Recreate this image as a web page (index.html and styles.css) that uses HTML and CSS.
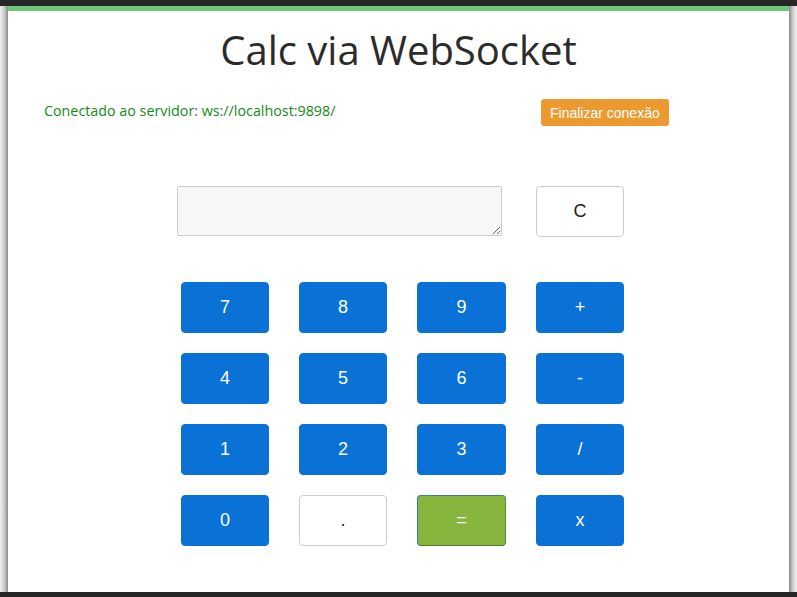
FILE: index.html
```html
<!DOCTYPE html>
<html lang="pt">
<head>
<meta charset="utf-8">
<title>Calc via WebSocket</title>
<link rel="stylesheet" href="styles.css">
</head>
<body>
<div class="frame">
  <div class="page">
    <h1 class="title">Calc via WebSocket</h1>
    <div class="status-row">
      <span class="status">Conectado ao servidor: ws://localhost:9898/</span>
      <button class="btn-close">Finalizar conexão</button>
    </div>
    <div class="calc">
      <div class="display-row">
        <textarea class="display"></textarea>
        <button class="key key-light key-clear">C</button>
      </div>
      <div class="keys">
        <button class="key">7</button>
        <button class="key">8</button>
        <button class="key">9</button>
        <button class="key">+</button>
        <button class="key">4</button>
        <button class="key">5</button>
        <button class="key">6</button>
        <button class="key">-</button>
        <button class="key">1</button>
        <button class="key">2</button>
        <button class="key">3</button>
        <button class="key">/</button>
        <button class="key">0</button>
        <button class="key key-light">.</button>
        <button class="key key-eq">=</button>
        <button class="key">x</button>
      </div>
    </div>
  </div>
</div>
</body>
</html>
```

FILE: styles.css
```css
html, body {
  margin: 0;
  padding: 0;
}
body {
  background: #262626;
  height: 597px;
  overflow: hidden;
  font-family: "Open Sans", sans-serif;
}
.frame {
  margin-top: 6px;
  height: 586px;
  padding: 0 8px;
  background:
    linear-gradient(to right, #f2f2f2 0, #cfcfcf 4px, #8a8a8a 8px) left top / 8px 100% no-repeat,
    linear-gradient(to left, #f2f2f2 0, #cfcfcf 4px, #8a8a8a 8px) right top / 8px 100% no-repeat,
    #ffffff;
}
.page {
  height: 100%;
  background: #ffffff;
  border-top: 5px solid #6cc777;
  box-sizing: border-box;
}
.title {
  margin: 0;
  padding-top: 13px;
  text-align: center;
  font-family: "Open Sans", sans-serif;
  font-weight: 400;
  font-size: 40px;
  line-height: 52px;
  color: #2b2b2b;
}
.status-row {
  display: flex;
  align-items: flex-start;
  margin-top: 23px;
  padding-left: 36px;
}
.status {
  color: #16891a;
  font-size: 14.3px;
  line-height: 18px;
  margin-top: 3px;
  width: 497px;
}
.btn-close {
  background: #ec9a30;
  color: #ffffff;
  border: none;
  border-radius: 3px;
  font-family: "Liberation Sans", Arial, sans-serif;
  font-size: 14px;
  height: 27px;
  padding: 0 9px;
}
.calc {
  margin-top: 60px;
  margin-left: 169px;
  width: 447px;
}
.display-row {
  display: flex;
  justify-content: space-between;
  align-items: flex-start;
}
.display {
  width: 325px;
  height: 50px;
  box-sizing: border-box;
  background: #f7f7f7;
  border: 1px solid #cccccc;
  border-radius: 2px;
  margin: 0;
  padding: 4px;
}
.keys {
  margin-top: 45px;
  margin-left: 4px;
  display: grid;
  grid-template-columns: 88px 88px 89px 88px;
  column-gap: 30px;
  row-gap: 20px;
}
.key {
  height: 51px;
  width: 100%;
  border: 1px solid #0a72d6;
  border-radius: 4px;
  background: #0a72d6;
  color: #ffffff;
  font-family: "Liberation Sans", Arial, sans-serif;
  font-size: 18px;
  padding: 0;
  margin: 0;
}
.key-light {
  background: #ffffff;
  color: #222222;
  border-color: #cccccc;
}
.key-clear {
  width: 88px;
}
.key-eq {
  background: #87b53d;
  border-color: #3d7ab0 #5c8a2a #4f7d25 #3d7ab0;
}
```
